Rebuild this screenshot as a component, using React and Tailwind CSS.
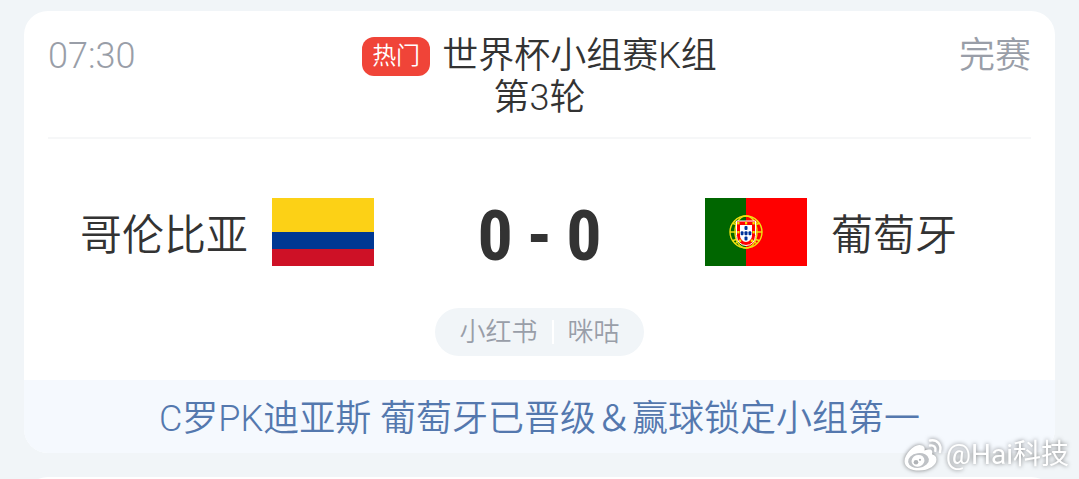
const sans = "font-['Roboto','Noto_Sans_CJK_SC',sans-serif]";

function ColombiaFlag() {
  return (
    <svg viewBox="0 0 102 68" className="h-[68px] w-[102px] shrink-0" role="img" aria-label="哥伦比亚">
      <rect width="102" height="34" fill="#fcd116" />
      <rect y="34" width="102" height="17" fill="#003893" />
      <rect y="51" width="102" height="17" fill="#ce1126" />
    </svg>
  );
}

function PortugalFlag() {
  return (
    <svg viewBox="0 0 102 68" className="h-[68px] w-[102px] shrink-0" role="img" aria-label="葡萄牙">
      <rect width="41" height="68" fill="#006600" />
      <rect x="41" width="61" height="68" fill="#ff0000" />
      <g fill="none" stroke="#f0e010" strokeWidth="1.4">
        <circle cx="41" cy="34" r="16" />
        <ellipse cx="41" cy="34" rx="11" ry="16" />
        <path d="M25 34h32M28 25.500Q41 31 54 25.500M28 42.500Q41 37 54 42.500" />
        <path d="M29 23L52 46M53 23L30 46" />
      </g>
      <path d="M31.500 23h19v14.500a9.500 10 0 0 1-19 0z" fill="#ff0000" stroke="#fff" strokeWidth="1" />
      <path d="M35 27h12v10.500a6 6.500 0 0 1-12 0z" fill="#fff" />
      <g fill="#003399">
        <rect x="39.500" y="28" width="3" height="4" rx="1" />
        <rect x="39.500" y="33.300" width="3" height="4" rx="1" />
        <rect x="39.500" y="38.600" width="3" height="4" rx="1" />
        <rect x="35.700" y="33.300" width="2.800" height="4" rx="1" />
        <rect x="43.500" y="33.300" width="2.800" height="4" rx="1" />
      </g>
      <g fill="#f5e800">
        <rect x="32.300" y="24" width="2.200" height="2.400" />
        <rect x="40" y="24" width="2.200" height="2.400" />
        <rect x="47.500" y="24" width="2.200" height="2.400" />
        <rect x="32.300" y="33" width="2.200" height="2.400" />
        <rect x="47.500" y="33" width="2.200" height="2.400" />
        <rect x="34" y="41.500" width="2.200" height="2.400" />
        <rect x="45.800" y="41.500" width="2.200" height="2.400" />
      </g>
    </svg>
  );
}

function WeiboIcon() {
  return (
    <svg viewBox="0 0 38 32" className="h-8 w-[38px] overflow-visible" aria-hidden="true">
      <path
        d="M15.500 6c-5.500-.5-15 9-15 16.200 0 6 6.500 9.300 14.500 9.300 10 0 17.500-5 17.500-11 0-3-2-4.500-4.500-5.300 1.200-3.500-.5-6.200-7.500-3.700.8-3-.8-5.300-5-5.500z"
        fill="#fff"
      />
      <ellipse cx="14.500" cy="21.500" rx="10.500" ry="7.300" fill="#bfc2c6" transform="rotate(-8 14.500 21.500)" />
      <ellipse cx="14" cy="21.800" rx="6.500" ry="5.800" fill="#fff" transform="rotate(-20 14 21.800)" />
      <circle cx="12" cy="23.300" r="2.300" fill="#b0b3b7" />
      <circle cx="16" cy="20.800" r="1.100" fill="#b0b3b7" />
      <path d="M26 1.500c7-1.500 12 4 10 11.500M26 6.500c3.800-.7 6.300 1.800 5.300 5.300" fill="none" stroke="#fff" strokeWidth="2.400" strokeLinecap="round" />
    </svg>
  );
}

export default function App() {
  return (
    <div className={`relative h-screen overflow-hidden bg-[#f1f5f8] px-6 pt-[11px] font-[350] text-[#333] ${sans}`}>
      <article className="overflow-hidden rounded-3xl bg-white">
        <header className="mx-6 grid grid-cols-[1fr_auto_1fr] border-b-2 border-[#f6f7f8] pt-6 pb-[18px] text-4xl leading-[42px]">
          <time className="text-[#999ea8]">07:30</time>
          <h1 className="flex flex-col items-center">
            <span className="flex items-center gap-3">
              <span className="flex h-[39px] items-center rounded-xl bg-[#f04438] px-[10px] text-2xl leading-6 text-white">
                热门
              </span>
              世界杯小组赛K组
            </span>
            <span>第3轮</span>
          </h1>
          <span className="text-right text-[#999ea8]">完赛</span>
        </header>

        <div className="grid grid-cols-[1fr_331px_1fr] items-center pt-[55px] text-[42px] leading-[68px]">
          <div className="flex items-center justify-end gap-6">
            <span className="pt-2">哥伦比亚</span>
            <ColombiaFlag />
          </div>
          <div className="flex items-center justify-center gap-[14px] pt-2 font-['Roboto_Condensed','Open_Sans_Condensed','Noto_Sans_Condensed',Roboto,sans-serif] text-[70px] font-bold">
            <span>0</span>
            <span>-</span>
            <span>0</span>
          </div>
          <div className="flex items-center gap-6">
            <PortugalFlag />
            <span className="pt-2">葡萄牙</span>
          </div>
        </div>

        <div className="mt-[38px] mb-6 flex justify-center">
          <div className="flex h-12 items-center gap-[14px] rounded-full bg-[#f1f5f8] px-6 text-[26px] leading-[48px] text-[#999ea8]">
            <span>小红书</span>
            <span className="h-6 w-0.5 bg-white" />
            <span>咪咕</span>
          </div>
        </div>

        <p className="bg-[#f5f9fe] pt-[18px] pb-[13px] text-center text-4xl leading-[42px] text-[#5478ae]">
          C罗PK迪亚斯 葡萄牙已晋级＆赢球锁定小组第一
        </p>
      </article>

      <article className="mt-6 h-12 rounded-3xl bg-white" />

      <div className="absolute right-[10px] bottom-2 flex items-center gap-1 text-[28px] leading-8 font-normal text-white drop-shadow-[0_0_2px_rgba(0,0,0,0.5)]">
        <WeiboIcon />
        <span>@Hai科技</span>
      </div>
    </div>
  );
}
